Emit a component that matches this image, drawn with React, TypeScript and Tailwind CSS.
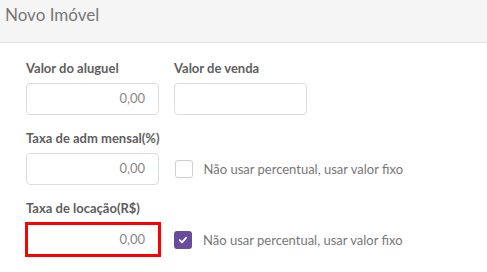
import React from 'react'

function Field({ label, value, className }: { label: string; value?: string; className?: string }) {
  return (
    <div className="flex flex-col">
      <label className="text-[13px] font-bold leading-[18px] text-[#5e5e5e]">{label}</label>
      <div
        className={`mt-[6px] flex h-[32px] w-[133px] items-center justify-end rounded-[4px] border border-[#dcdcdc] pr-[13px] text-[13px] text-[#888] ${className ?? ''}`}
      >
        {value}
      </div>
    </div>
  )
}

function Check({ checked }: { checked?: boolean }) {
  return (
    <div className="mt-[23px] flex items-center gap-[11px]">
      {checked ? (
        <span className="flex h-[18px] w-[18px] items-center justify-center rounded-[3px] bg-[#6a4c9c]">
          <svg width="10" height="10" viewBox="0 0 10 10">
            <path d="M1.8 5.2 L4 7.3 L8.2 2.6" fill="none" stroke="white" strokeWidth="1.8" strokeLinecap="round" strokeLinejoin="round" />
          </svg>
        </span>
      ) : (
        <span className="h-[18px] w-[18px] rounded-[3px] border border-[#cfcfcf] bg-white" />
      )}
      <span className="text-[13px] leading-[18px] text-[#777]">Não usar percentual, usar valor fixo</span>
    </div>
  )
}

export default function App() {
  return (
    <div className="h-[272px] w-[487px] overflow-hidden bg-white font-['Lato',sans-serif]">
      <div className="h-[43px] border-b border-[#e4e4e4] bg-[#f5f5f5] pl-[5px] pt-[3px]">
        <span className="text-[17px] leading-6 text-[#777]">Novo Imóvel</span>
      </div>
      <div className="flex flex-col gap-[14px] pl-[26px] pt-[16px]">
        <div className="flex gap-[15px]">
          <Field label="Valor do aluguel" value="0,00" />
          <Field label="Valor de venda" />
        </div>
        <div className="flex gap-[15px]">
          <Field label="Taxa de adm mensal(%)" value="0,00" />
          <Check />
        </div>
        <div className="flex gap-[13px]">
          <div className="flex flex-col">
            <label className="text-[13px] font-bold leading-[18px] text-[#5e5e5e]">Taxa de locação(R$)</label>
            <div className="-ml-px mt-[5px] flex h-[35px] w-[136px] items-center justify-end border-[3px] border-[#ff0000] pr-[13px] text-[13px] text-[#888]">
              0,00
            </div>
          </div>
          <Check checked />
        </div>
      </div>
    </div>
  )
}
